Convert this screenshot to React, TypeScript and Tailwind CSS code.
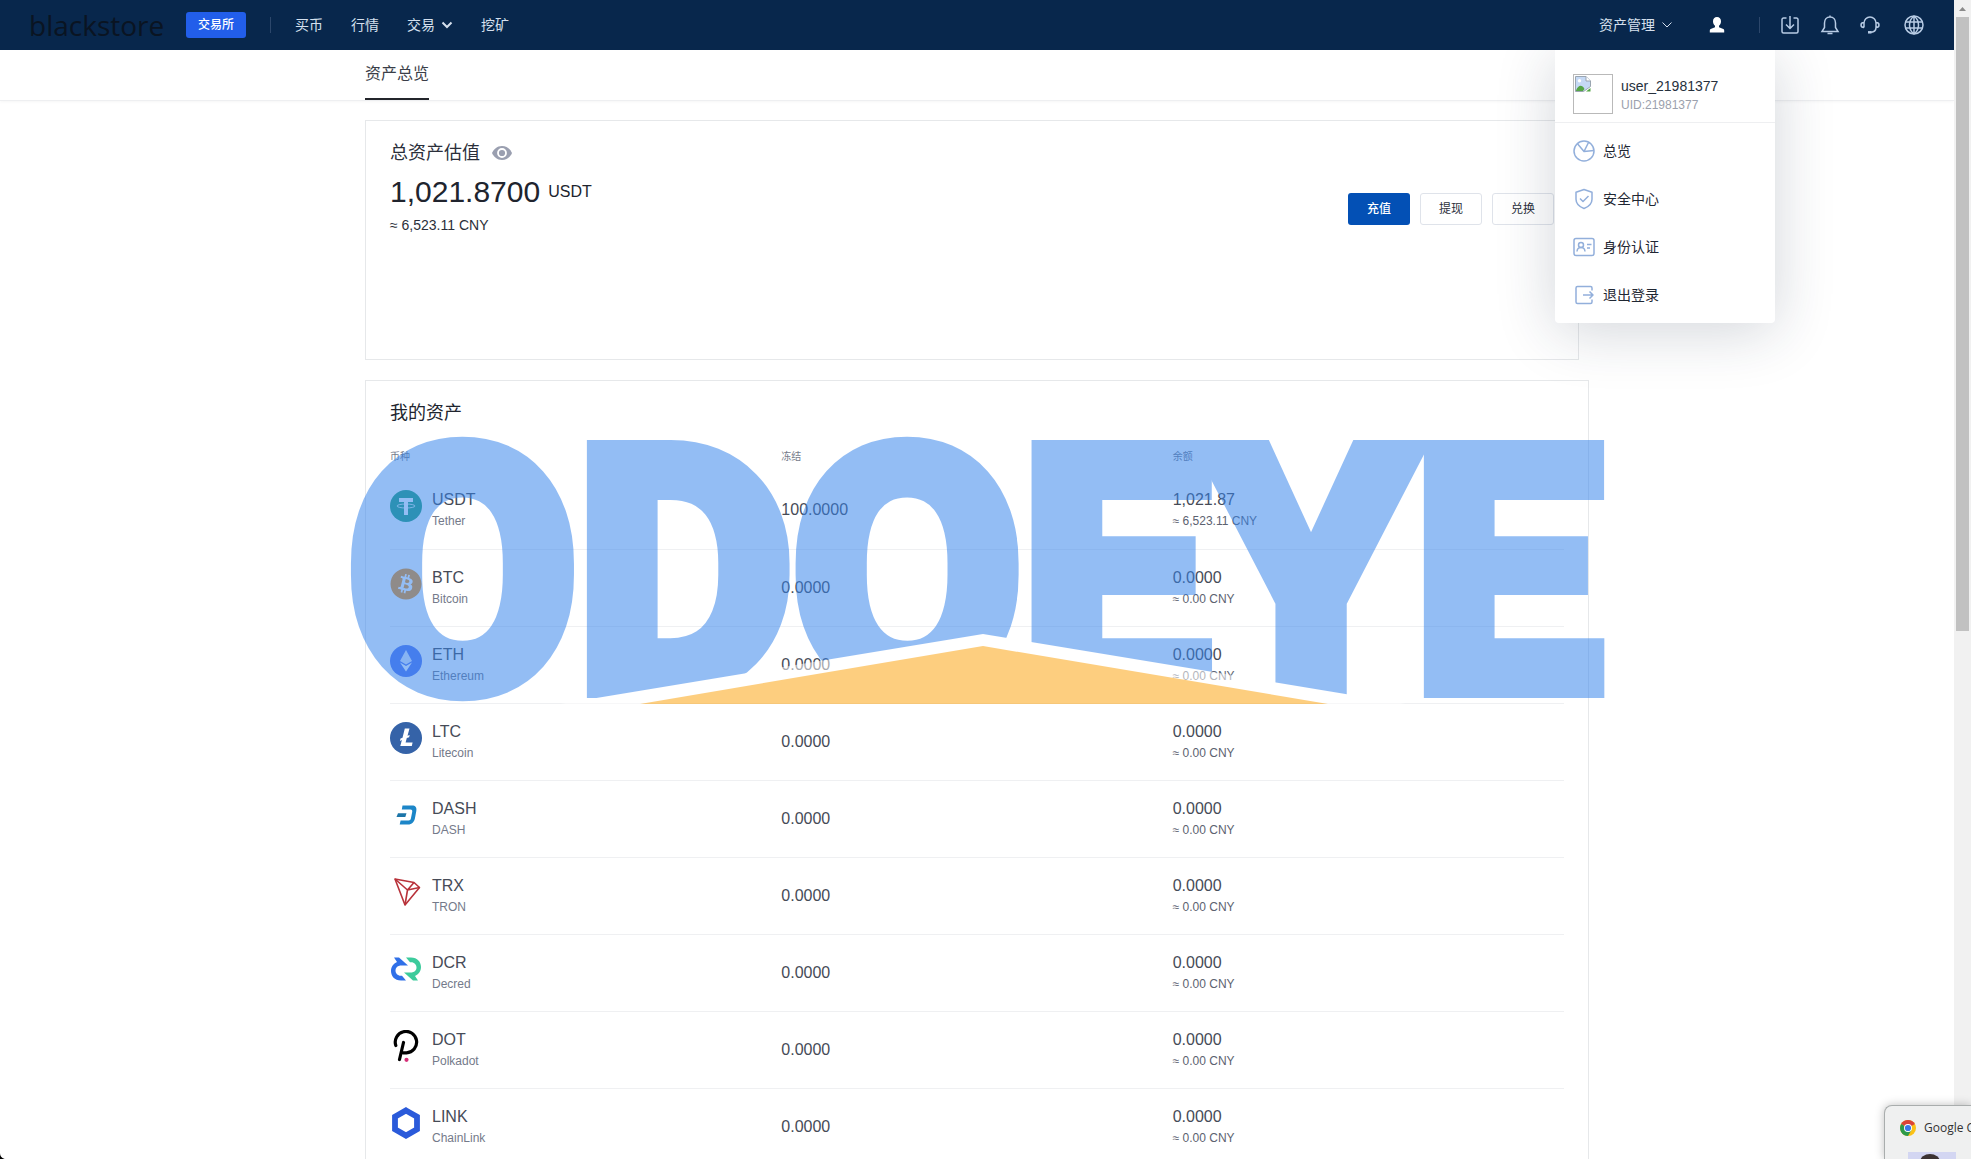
import type { ReactNode } from 'react'
import { FaBitcoin } from 'react-icons/fa'

interface Asset {
  symbol: string
  name: string
  frozen: string
  balance: string
  cny: string
  icon: ReactNode
}

interface MenuItem {
  label: string
  icon: ReactNode
}

const assets: Asset[] = [
  {
    symbol: 'USDT',
    name: 'Tether',
    frozen: '100.0000',
    balance: '1,021.87',
    cny: '6,523.11',
    icon: (
      <svg className="w-8 h-8" viewBox="0 0 32 32">
        <circle cx="16" cy="16" r="16" fill="#26a17b" />
        <path fill="#fff" d="M9 8h14v4h-5v13h-4V12H9z" />
        <ellipse cx="16" cy="16" rx="9" ry="2" fill="none" stroke="#fff" strokeWidth=".8" />
      </svg>
    )
  },
  {
    symbol: 'BTC',
    name: 'Bitcoin',
    frozen: '0.0000',
    balance: '0.0000',
    cny: '0.00',
    icon: <FaBitcoin className="w-8 h-8 text-[#f7931a]" />
  },
  {
    symbol: 'ETH',
    name: 'Ethereum',
    frozen: '0.0000',
    balance: '0.0000',
    cny: '0.00',
    icon: (
      <svg className="w-8 h-8" viewBox="0 0 32 32">
        <circle cx="16" cy="16" r="16" fill="#5878f0" />
        <path fill="#fff" d="M16 5l-6 11 6 3.500 6-3.500z" opacity=".85" />
        <path fill="#fff" d="M10 17.500l6 9 6-9-6 3.500z" />
      </svg>
    )
  },
  {
    symbol: 'LTC',
    name: 'Litecoin',
    frozen: '0.0000',
    balance: '0.0000',
    cny: '0.00',
    icon: (
      <svg className="w-8 h-8" viewBox="0 0 32 32">
        <circle cx="16" cy="16" r="16" fill="#3563a8" />
        <path fill="#fff" d="M14.800 6.500h4.700l-2 7.300 2.200-.9-.6 2.300-2.300.9-1.200 4.300h7l-.8 3.600H10.300l1.600-5.900-2 .8.600-2.300 2-.8z" />
      </svg>
    )
  },
  {
    symbol: 'DASH',
    name: 'DASH',
    frozen: '0.0000',
    balance: '0.0000',
    cny: '0.00',
    icon: (
      <svg className="w-8 h-8" viewBox="0 0 32 32">
        <path fill="#1c86c8" d="M12.500 6.500h9.500c3.500 0 5 2 4.300 5.500l-1.300 7c-.8 4-3 6.500-7 6.500H9.700l.9-4h8c1.400 0 2-.8 2.300-2l1.300-6.500c.3-1.600-.2-2.500-1.700-2.500h-8.700z" />
        <path fill="#1c75a8" d="M8 14.300h8.500l-1.200 3.700H6.500z" />
      </svg>
    )
  },
  {
    symbol: 'TRX',
    name: 'TRON',
    frozen: '0.0000',
    balance: '0.0000',
    cny: '0.00',
    icon: (
      <svg className="w-8 h-8" viewBox="0 0 32 32" fill="none" stroke="#b8323a" strokeWidth="1.600" strokeLinejoin="round">
        <path d="M5 3l19 3.500 5.500 5L15 29z" />
        <path d="M5 3l12.500 11L15 29M17.500 14l12-2.500M17.500 14L24 6.500" />
      </svg>
    )
  },
  {
    symbol: 'DCR',
    name: 'Decred',
    frozen: '0.0000',
    balance: '0.0000',
    cny: '0.00',
    icon: (
      <svg className="w-8 h-8" viewBox="0 0 32 32" fill="none">
        <path fill="#3070e8" d="M4 4.500h5l9 8h-6.500c-4 0-6 2.300-6 5s2 5.300 5.500 5.300h1l4 4.700h-5C4.500 27.500 1 23 1 18c0-4.200 2.400-7.400 6-9z" />
        <path fill="#3ccb9c" d="M28 27.500h-5l-9-8h6.500c4 0 6-2.300 6-5s-2-5.300-5.500-5.300h-1L16 4.500h5c6.500 0 10 4.500 10 9.500 0 4.200-2.400 7.400-6 9z" />
      </svg>
    )
  },
  {
    symbol: 'DOT',
    name: 'Polkadot',
    frozen: '0.0000',
    balance: '0.0000',
    cny: '0.00',
    icon: (
      <svg className="w-8 h-8" viewBox="0 0 32 32" fill="none">
        <path d="M5.800 15.500A10.700 10.700 0 1 1 16.500 22.800H13M13.500 12.500L9.500 29.500" stroke="#000" strokeWidth="3.200" strokeLinecap="round" />
        <circle cx="16.500" cy="29.800" r="2.100" fill="#d62f78" />
      </svg>
    )
  },
  {
    symbol: 'LINK',
    name: 'ChainLink',
    frozen: '0.0000',
    balance: '0.0000',
    cny: '0.00',
    icon: (
      <svg className="w-8 h-8" viewBox="0 0 32 32" fill="none">
        <path d="M16 3.400l11 6.300v12.600l-11 6.300-11-6.300V9.700z" stroke="#2a5ada" strokeWidth="5.800" />
      </svg>
    )
  }
]

const menuItems: MenuItem[] = [
  {
    label: '总览',
    icon: (
      <>
        <circle cx="11" cy="11" r="10" />
        <path d="M4.500 3.800L11 11.500l4.500-9M11 11.500l10-1" />
      </>
    )
  },
  {
    label: '安全中心',
    icon: (
      <>
        <path d="M11 1.500l8 2.800v7c0 5-4 7.700-8 9.200-4-1.500-8-4.200-8-9.200v-7z" />
        <path d="M7 10.500l3 3 5.500-5.500" />
      </>
    )
  },
  {
    label: '身份认证',
    icon: (
      <>
        <rect x="1" y="2.500" width="20" height="17" rx="2" />
        <circle cx="8" cy="9" r="2.500" />
        <path d="M4 15.500c.3-5.300 7.700-5.300 8 0M14 8.500h4.500M14 12h3" />
      </>
    )
  },
  {
    label: '退出登录',
    icon: (
      <>
        <path d="M19 6.500V4c0-1-.5-1.500-1.500-1.500h-13C3.500 2.500 3 3 3 4v14c0 1 .5 1.500 1.500 1.500h13c1 0 1.500-.5 1.500-1.500v-2.500" />
        <path d="M10 11h9.500M16.500 7.500L20 11l-3.500 3.500" />
      </>
    )
  }
]

function Chevron({ className }: { className: string }) {
  return (
    <svg className={className} viewBox="0 0 12 12" fill="none" stroke="currentColor">
      <path d="M1.500 3.500L6 8l4.500-4.500" />
    </svg>
  )
}

function TopBar() {
  return (
    <header className="relative z-20 flex items-center justify-between h-[50px] bg-[#08274c] text-sm text-[#d5e0ee]">
      <div className="flex items-center pl-[29px]">
        <a href="#" className="w-[135px] text-[28px] leading-[50px] text-[#0a1422] font-['Open_Sans',sans-serif]">
          blackstore
        </a>
        <button className="ml-[22px] w-[60px] h-[26px] rounded-[3px] bg-[#225eea] text-white text-xs font-medium">
          交易所
        </button>
        <span className="ml-6 w-px h-4 bg-[#2c476b]" />
        <nav className="flex items-center gap-7 ml-6">
          <a href="#">买币</a>
          <a href="#">行情</a>
          <a href="#" className="flex items-center gap-1.5">
            交易
            <Chevron className="w-3 h-3 stroke-2" />
          </a>
          <a href="#">挖矿</a>
        </nav>
      </div>

      <div className="flex items-center pr-[30px]">
        <button className="flex items-center gap-1.5">
          资产管理
          <Chevron className="w-3 h-3" />
        </button>
        <button aria-label="用户" className="ml-9">
          <svg className="w-4 h-4" viewBox="0 0 16 16" fill="#fff">
            <path d="M8 0c2.500 0 4 1.800 4 4.300 0 1.900-.9 3.600-2 4.500v1.400l4.300 1.900c.6.300.9.700.9 1.300V15.500H.8v-2.100c0-.6.300-1 .9-1.300L6 10.200V8.800C4.900 7.900 4 6.200 4 4.300 4 1.800 5.500 0 8 0z" />
          </svg>
        </button>
        <span className="ml-[34px] w-px h-4 bg-[#2c476b]" />
        <div className="flex items-center gap-5 ml-5">
          <button aria-label="下载">
            <svg className="w-5 h-5" viewBox="0 0 20 20" fill="none" stroke="#b7cbe4" strokeWidth="1.500">
              <path d="M6.500 3H3.500C2.700 3 2 3.700 2 4.500v12c0 .8.700 1.500 1.500 1.500h13c.8 0 1.500-.7 1.500-1.500v-12c0-.8-.7-1.500-1.500-1.500h-3M10 1v12.500M6 9.500l4 4 4-4" />
            </svg>
          </button>
          <button aria-label="通知">
            <svg className="w-5 h-5" viewBox="0 0 20 20" fill="none" stroke="#b7cbe4" strokeWidth="1.500">
              <path d="M10 2c-3.500 0-5.500 2.700-5.500 6v4.500L2 16.500h16l-2.500-4V8c0-3.300-2-6-5.500-6zM7.500 18.500h5M10 .5V2" />
            </svg>
          </button>
          <button aria-label="客服">
            <svg className="w-5 h-5" viewBox="0 0 20 20" fill="none" stroke="#b7cbe4" strokeWidth="1.500">
              <path d="M4 12.500V8a6 6 0 0 1 12 0v4.500c0 3-2 4.800-6 4.800M4 7.500c-4 0-4 5 0 5M16 7.500c4 0 4 5 0 5" />
              <path d="M8 17.300h3.500" strokeWidth="2.500" />
            </svg>
          </button>
          <button aria-label="语言" className="ml-1">
            <svg className="w-5 h-5" viewBox="0 0 20 20" fill="none" stroke="#b7cbe4" strokeWidth="1.500">
              <circle cx="10" cy="10" r="9" />
              <path d="M10 1v18M1.500 7h17M1.500 13h17M10 1c-6 4.500-6 13.500 0 18M10 1c6 4.500 6 13.500 0 18" />
            </svg>
          </button>
        </div>
      </div>
    </header>
  )
}

function UserMenu() {
  return (
    <div className="absolute z-10 top-[50px] right-[179px] w-[220px] h-[273px] rounded-b bg-white shadow-[0_8px_60px_rgba(30,45,70,0.2)]">
      <div className="flex gap-2 h-[73px] pt-6 pl-[18px] border-b border-[#eeeff1]">
        {/* Avatar that failed to load */}
        <div className="w-10 h-10 border border-[#b9b9b9]">
          <svg className="w-4 h-4 m-px" viewBox="0 0 16 16">
            <path d="M.5.500h10.500l4.500 4.500v5.500l-7 5H.5z" fill="#c5d9f5" stroke="#9aa5b1" />
            <path d="M11 .5V5h4.500" fill="#fff" stroke="#9aa5b1" />
            <circle cx="4.500" cy="4.800" r="1.700" fill="#fff" />
            <path d="M1 14.500c2.500-6 6-6 8.500-1.500l-1.500 2H1z" fill="#54a546" />
            <path d="M15.500 12v3.500H11z" fill="#54a546" />
          </svg>
        </div>
        <div className="pt-0.5">
          <p className="text-sm leading-5 text-[#26303c]">user_21981377</p>
          <p className="text-xs leading-[18px] text-[#9ba1ad]">UID:21981377</p>
        </div>
      </div>
      <ul className="pt-1">
        {menuItems.map((item) => (
          <li key={item.label}>
            <a href="#" className="flex items-center gap-2 h-12 pl-[18px] text-sm text-[#1f2733]">
              <svg className="w-[22px] h-[22px]" viewBox="0 0 22 22" fill="none" stroke="#92afdb" strokeWidth="1.500" strokeLinejoin="round">
                {item.icon}
              </svg>
              {item.label}
            </a>
          </li>
        ))}
      </ul>
    </div>
  )
}

function TotalCard() {
  return (
    <section className="flex justify-between h-[240px] mr-2.5 px-6 pt-[21px] border border-[#e6e8ea]">
      <div>
        <div className="flex items-center gap-3">
          <h2 className="text-lg leading-[22px] text-[#2b2f3a]">总资产估值</h2>
          <button aria-label="隐藏金额">
            <svg className="w-5 h-4" viewBox="0 0 20 16">
              <path d="M10 1c5 0 8.500 3.500 10 7-1.500 3.500-5 7-10 7S1.500 11.500 0 8c1.500-3.500 5-7 10-7z" fill="#9a9fb0" />
              <circle cx="10" cy="8" r="4" fill="none" stroke="#fff" strokeWidth="1.800" />
            </svg>
          </button>
        </div>
        <p className="flex items-center gap-2 mt-1.5 text-[#20242e]">
          <span className="text-[30px] leading-[44px]">1,021.8700</span>
          <span className="text-base leading-[44px]">USDT</span>
        </p>
        <p className="text-sm leading-[22px] text-[#2b2f3a]">≈ 6,523.11 CNY</p>
      </div>
      <div className="flex gap-2.5 mt-[51px] text-xs">
        <button className="w-[62px] h-8 rounded-[3px] bg-[#0350b5] text-white font-medium">充值</button>
        <button className="w-[62px] h-8 rounded-[3px] border border-[#dfe3ea] text-[#2b2f3a]">提现</button>
        <button className="w-[62px] h-8 rounded-[3px] border border-[#dfe3ea] text-[#2b2f3a]">兑换</button>
      </div>
    </section>
  )
}

function Watermark() {
  return (
    <svg
      className="absolute overflow-visible pointer-events-none -left-4 top-[59px] w-[1270px] h-[272px]"
      viewBox="0 0 1270 272"
      opacity=".53"
    >
      <text
        x="-2"
        y="247"
        className="font-['Roboto',sans-serif] font-bold text-[332px]"
        fill="#3584ec"
        stroke="#3584ec"
        strokeWidth="22"
      >
        ODOEYE
      </text>
      <path d="M180 269L633 194l453 75z" fill="#fff" />
      <path d="M290 264L633 206l345 58z" fill="#fda40f" />
    </svg>
  )
}

function AssetTable() {
  return (
    <section className="relative mt-5 px-6 pt-5 border border-[#e6e8ea]">
      <h2 className="text-lg leading-6 text-[#20242e]">我的资产</h2>
      <table className="w-full mt-4 table-fixed text-left">
        <thead>
          <tr className="h-[31px] text-[10px] text-[#747a8a]">
            <th className="font-normal">币种</th>
            <th className="font-normal">冻结</th>
            <th className="font-normal">余额</th>
          </tr>
        </thead>
        <tbody>
          {assets.map((asset) => (
            <tr key={asset.symbol} className="h-[77px] border-b border-[#eff0f2] text-base text-[#464b57]">
              <td className="pt-[17px] align-top">
                <div className="flex gap-2.5">
                  <div className="mt-px">{asset.icon}</div>
                  <div>
                    <p className="leading-[22px]">{asset.symbol}</p>
                    <p className="text-xs leading-5 text-[#747a8a]">{asset.name}</p>
                  </div>
                </div>
              </td>
              <td className="align-middle">{asset.frozen}</td>
              <td className="pt-[17px] align-top">
                <p className="leading-[22px]">{asset.balance}</p>
                <p className="text-xs leading-5 text-[#5c6270]">≈ {asset.cny} CNY</p>
              </td>
            </tr>
          ))}
        </tbody>
      </table>
      <Watermark />
    </section>
  )
}

function Scrollbar() {
  return (
    <div className="flex flex-col items-center w-[17px] shrink-0 bg-[#f1f1f1]">
      <svg className="w-[17px] h-[17px]" viewBox="0 0 17 17">
        <path d="M5 11l3.500-4 3.500 4z" fill="#8b8b8b" />
      </svg>
      <div className="w-[13px] h-[53%] bg-[#c1c1c1]" />
    </div>
  )
}

function BrowserToast() {
  return (
    <div className="absolute z-30 right-0 bottom-0 w-[87px] h-[54px] pt-3 pl-[15px] overflow-hidden rounded-tl-lg border-t border-l border-[#a9adad] bg-[#eff0f0] shadow-[0_0_10px_rgba(0,0,0,0.25)]">
      <div className="flex items-center gap-2 text-xs leading-5 whitespace-nowrap text-[#333] font-['Open_Sans',sans-serif]">
        <svg className="w-4 h-4 shrink-0" viewBox="0 0 16 16">
          <circle cx="8" cy="8" r="8" fill="#fbc116" />
          <path d="M8 8L1.100 4A8 8 0 0 1 14.900 4z" fill="#db4437" />
          <path d="M8 8L1.100 4A8 8 0 0 0 8 16l3.500-6z" fill="#2d9a4b" />
          <circle cx="8" cy="8" r="4" fill="#fff" />
          <circle cx="8" cy="8" r="3.100" fill="#3b78e7" />
        </svg>
        Google C
      </div>
      <svg className="w-12 h-4 mt-3.5 ml-2" viewBox="0 0 48 16">
        <rect width="48" height="16" fill="#d3d6f2" />
        <ellipse cx="22" cy="10" rx="10" ry="8" fill="#3b3233" />
      </svg>
    </div>
  )
}

export default function App() {
  return (
    <div className="relative flex h-screen overflow-hidden bg-white font-['Liberation_Sans','Noto_Sans_CJK_SC',sans-serif]">
      <div className="relative flex-1 min-w-0 overflow-hidden">
        <TopBar />
        <div className="h-[51px] border-b border-[#eeeff1] shadow-[0_1px_3px_rgba(0,0,0,0.04)]">
          <div className="max-w-[1224px] mx-auto">
            <a href="#" className="inline-block h-[50px] border-b-2 border-[#23252b] text-base leading-[48px] text-[#3a3e48]">
              资产总览
            </a>
          </div>
        </div>
        <main className="max-w-[1224px] mx-auto pt-[19px]">
          <TotalCard />
          <AssetTable />
        </main>
        <UserMenu />
      </div>
      <Scrollbar />
      <BrowserToast />
      {/* Dark desktop corner under the rounded window */}
      <svg className="absolute left-0 bottom-0 w-1.5 h-1.5" viewBox="0 0 6 6">
        <path d="M0 0c0 3.500 2.500 6 6 6H0z" fill="#000" />
      </svg>
    </div>
  )
}
